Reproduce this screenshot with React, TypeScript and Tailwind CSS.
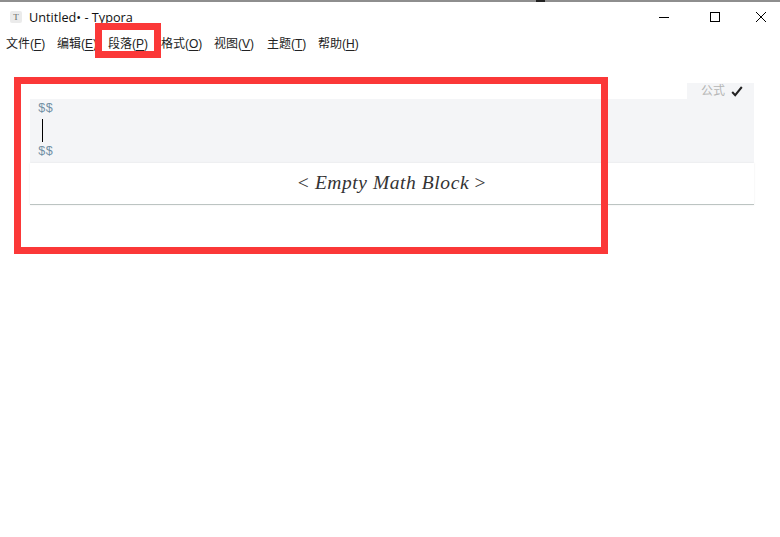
const menus: { label: string; key: string; width: string }[] = [
  { label: "文件", key: "F", width: "w-[51px]" },
  { label: "编辑", key: "E", width: "w-[51px]" },
  { label: "段落", key: "P", width: "w-[53px]" },
  { label: "格式", key: "O", width: "w-[53px]" },
  { label: "视图", key: "V", width: "w-[53px]" },
  { label: "主题", key: "T", width: "w-[51px]" },
  { label: "帮助", key: "H", width: "w-[51px]" },
];

const ui = "font-['Liberation_Sans','Noto_Sans_CJK_SC',sans-serif]";

export default function App() {
  return (
    <div className={`relative flex h-[537px] w-[780px] flex-col overflow-hidden bg-white ${ui}`}>
      {/* screen edge above the window */}
      <div className="relative h-[2px] shrink-0 bg-[#8e8e8e]">
        <div className="absolute left-[536px] top-0 h-[2px] w-[9px] bg-[#222222]" />
      </div>

      {/* title bar */}
      <div className="flex h-[30px] shrink-0 items-center pl-[10px] text-[#111111]">
        <div className="flex h-[12px] w-[12px] items-center justify-center rounded-[2px] bg-[#ebebeb] font-['Liberation_Serif',serif] text-[9px] leading-none text-[#666666]">
          T
        </div>
        <span className="ml-[7px] font-['Open_Sans',sans-serif] text-[12.7px] leading-none">Untitled• - Typora</span>
        <div className="ml-auto flex items-center">
          <svg width="12" height="12" viewBox="0 0 12 12" className="mr-[39px]">
            <path d="M1 6.5H11" stroke="#000" strokeWidth="1" />
          </svg>
          <svg width="12" height="12" viewBox="0 0 12 12" className="mr-[34px]">
            <rect x="1.5" y="1.5" width="9" height="9" fill="none" stroke="#000" strokeWidth="1" />
          </svg>
          <svg width="12" height="12" viewBox="0 0 12 12" className="mr-[13px]">
            <path d="M1 1L11 11M11 1L1 11" stroke="#000" strokeWidth="1" />
          </svg>
        </div>
      </div>

      {/* menu bar */}
      <div className="flex h-[24px] shrink-0 items-center pl-[6px] text-[12px] leading-none text-[#222222]">
        {menus.map(({ label, key, width }) => (
          <span key={key} className={`whitespace-nowrap ${width}`}>
            {label}(<span className="underline underline-offset-2">{key}</span>)
          </span>
        ))}
      </div>

      {/* editor */}
      <div className="mt-[27px] pl-[30px] pr-[26px]">
        <div className="ml-auto flex h-[16px] w-[67px] items-center bg-[#f4f5f7] pl-[14px] text-[12px] leading-none text-[#b5b5b5]">
          <span>公式</span>
          <svg width="12" height="11" viewBox="0 0 12 11" className="ml-[6px]">
            <path d="M1.2 6L4.2 9.2L10.8 1" fill="none" stroke="#222222" strokeWidth="2" />
          </svg>
        </div>
        <div className="flex h-[64px] flex-col bg-[#f4f5f7] pl-[8px] font-['Liberation_Mono',monospace] text-[12.5px] leading-[18px] text-[#6f8ea3]">
          <span className="mt-[1px]">$$</span>
          <span className="my-[1px] ml-[4px] h-[23px] w-[1px] bg-black" />
          <span>$$</span>
        </div>
        <div className="flex h-[42px] items-center justify-center border-b border-[#bcc4c2] pb-[1px] font-['Liberation_Serif',serif] text-[19.5px] tracking-[0.57px] text-[#333333] shadow-[0_0_2px_rgba(0,0,0,0.08)]">
          <span className="whitespace-nowrap">
            &lt; <i>Empty Math Block</i> &gt;
          </span>
        </div>
      </div>

      {/* red annotation boxes drawn over the screenshot */}
      <div className="absolute left-[95px] top-[23px] h-[35px] w-[66px] border-[7px] border-[#fb3838]" />
      <div className="absolute left-[14px] top-[77px] h-[177px] w-[594px] border-[7px] border-[#fb3838]" />
    </div>
  );
}
